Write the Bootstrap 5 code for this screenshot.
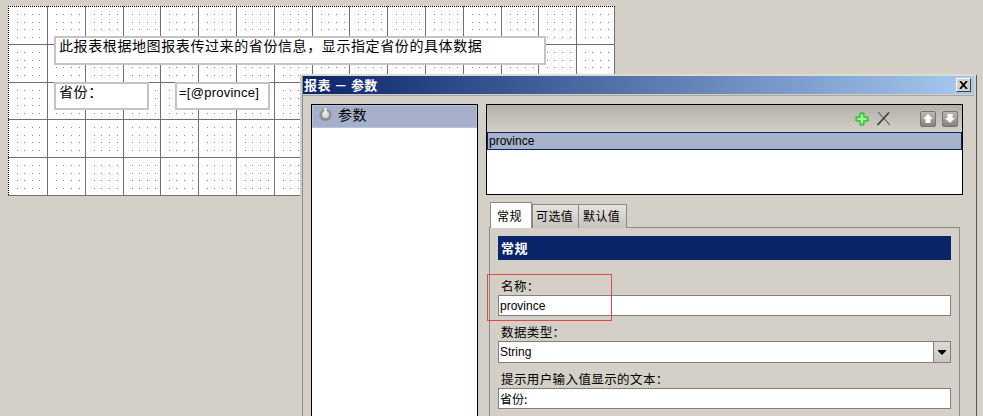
<!DOCTYPE html>
<html lang="zh-CN">
<head>
<meta charset="UTF-8">
<meta name="viewport" content="width=device-width, initial-scale=1.0">
<title>报表 - 参数</title>
<link href="https://cdn.jsdelivr.net/npm/bootstrap@5.3.0/dist/css/bootstrap.min.css" rel="stylesheet">
<style>
html, body { height: 416px; overflow: hidden; }
body { background: #d4d0c8; color: #000; font: 12px/14px "Liberation Sans", "Noto Sans CJK SC", sans-serif; position: relative; }
.cjk { font-family: "Noto Sans CJK SC", "Liberation Sans", sans-serif; }

/* report sheet */
.sheet { position: absolute; left: 8px; top: 6px; width: 607px; height: 190px; background: #fff; }
.sheet svg { position: absolute; left: 0; top: 0; }
.rcell { position: absolute; background: #fff; border: 2px solid #c4c4c4; font-size: 14px; line-height: 14px; padding: 0 3px; white-space: nowrap; }
.rc-desc { left: 46px; top: 30px; width: 492px; height: 29px; letter-spacing: .6px; }
.rc-prov { left: 46px; top: 76px; width: 95px; height: 28px; letter-spacing: .6px; }
.rc-expr { left: 167px; top: 76px; width: 95px; height: 28px; padding: 1px 0 0 2px; line-height: 16px; font-family: "Liberation Sans", sans-serif; font-size: 13px; letter-spacing: .25px; }

/* dialog window */
.dlg { position: absolute; left: 300px; top: 74px; width: 677px; height: 342px; overflow: hidden; background: #d4d0c8; border-left: 2px solid #d4d0c8; border-top: 2px solid #dedbd4; border-right: 1px solid #55534f; padding-left: 1px; padding-right: 2px; box-shadow: inset 1px 0 0 #8f8d88; }
.dlg-title { height: 18px; padding: 0 3px 0 1px; background: linear-gradient(90deg, #0a246a, #a6caf0); color: #fff; font-weight: 700; font-size: 13px; line-height: 18px; letter-spacing: .4px; }
.dlg-close { width: 15px; height: 14px; padding: 0; background: #d4d0c8; border: 1px solid; border-color: #fff #404040 #404040 #fff; }
.dlg-body { border-top: 1px solid #a9a69f; padding: 8px 11px 0 8px; gap: 8px; margin-top: 1px; }
.tree { width: 167px; height: 312px; flex: none; background: #fff; border: 1px solid #000; border-bottom: 0; }
.tree-row { height: 23px; background: #a6b0ca; border: 1px solid #b4c4e2; padding: 0 0 5px 5px; gap: 5px; font-size: 14px; letter-spacing: .5px; }
.right-col { width: 477px; flex: none; }
.plist { height: 91px; background: #fff; border: 1px solid #000; }
.ptools { height: 27px; background: linear-gradient(#b3b0a8, #d4d0c8); padding-right: 4px; gap: 7px; }
.ptools .tool-gap { width: 16px; }
.imgbtn { width: 16px; height: 16px; padding: 0; margin-left: -1px; border: 1px solid #77756f; border-radius: 2px; background: linear-gradient(#bdbab3, #85837d); }
.prow { height: 18px; background: #a6b1ca; border: 1px solid #0a246a; padding-left: 1px; line-height: 16px; }

.tabs-x { margin: 7px 0 0 4px; height: 26px; }
.tab-x { height: 24px; margin-top: 2px; padding: 0 0 0 3px; background: linear-gradient(#e6e4df, #c6c3bc); border: 1px solid #8a8a8a; border-bottom: 0; font-size: 12px; line-height: 21px; letter-spacing: .4px; width: 47px; }
.tab-x.on { height: 26px; margin-top: 0; width: 42px; padding: 2px 0 0 6px; background: #fff; position: relative; z-index: 1; }
.tab-x.last { width: 49px; margin-left: -1px; padding-left: 4px; }
.pane { margin-left: 3px; margin-top: -1px; width: 471px; height: 189px; border: 1px solid #8a8a8a; border-bottom: 0; padding: 8px 8px 0 8px; }
.banner { height: 24px; background: #0a246a; color: #fff; font-weight: 700; font-size: 13px; line-height: 24px; padding-left: 3px; letter-spacing: .5px; }
.flabel { margin: 0 0 1px; padding-left: 3px; font-size: 12.5px; line-height: 16px; letter-spacing: .4px; display: block; }
.fbox { display: block; width: 100%; height: 21px; padding: 0 1px; border: 1px solid #808080; border-radius: 0; background: #fff; color: #000; font-size: 12px; line-height: 19px; }
.fbox:focus { box-shadow: none; border-color: #808080; }
.f1 { margin-top: 18px; }
.f2, .f3 { margin-top: 8px; }
.combo { height: 22px; }
.combo .fbox { height: 22px; flex: 1; }
.combo-btn { width: 18px; height: 22px; flex: none; margin-left: -1px; padding: 0; border: 1px solid #808080; border-radius: 0; background: linear-gradient(#dedbd5, #c9c6bf); }
.redbox { position: absolute; left: 487px; top: 274px; width: 125px; height: 47px; border: 1px solid #e04848; pointer-events: none; z-index: 3; }
</style>
</head>
<body>

<div class="sheet">
    <svg id="sheetlines" width="607" height="190"></svg>
    <div class="rcell cjk rc-desc">此报表根据地图报表传过来的省份信息，显示指定省份的具体数据</div>
    <div class="rcell cjk rc-prov">省份：</div>
    <div class="rcell rc-expr">=[@province]</div>
</div>

<div class="dlg">
    <div class="dlg-title d-flex align-items-center justify-content-between">
        <span class="cjk">报表 － 参数</span>
        <button class="dlg-close d-flex align-items-center justify-content-center" type="button" aria-label="关闭">
            <svg width="9" height="8" viewBox="0 0 9 8"><path d="M1 0 L8 8 M8 0 L1 8" stroke="#000" stroke-width="1.8"/></svg>
        </button>
    </div>
    <div class="dlg-body d-flex align-items-start">
        <div class="tree">
            <div class="tree-row d-flex align-items-center cjk">
                <svg width="15" height="15" viewBox="0 0 15 15">
                    <circle cx="7.5" cy="8" r="6" fill="#8f8f8e"/>
                    <circle cx="7.5" cy="7.5" r="3.5" fill="#dcdcda"/>
                    <rect x="6.5" y="1" width="2" height="6.5" fill="#f6f6f4"/>
                </svg>
                <span>参数</span>
            </div>
        </div>
        <div class="right-col">
            <div class="plist">
                <div class="ptools d-flex align-items-center justify-content-end">
                    <svg width="14" height="14" viewBox="0 0 14 14">
                        <path d="M5 1 H9 V5 H13 V9 H9 V13 H5 V9 H1 V5 H5 Z" fill="#5fe85f" stroke="#1fb51f" stroke-width="1"/>
                        <path d="M6 3 H8 V6 H11 V8 H8 V11 H6 V8 H3 V6 H6 Z" fill="#a5f7a5"/>
                    </svg>
                    <svg width="15" height="15" viewBox="0 0 15 15">
                        <path d="M1.5 14 L13 1.5" stroke="#3d3d3d" stroke-width="1.8"/>
                        <path d="M2 1 L14 14" stroke="#55534f" stroke-width="1.1"/>
                    </svg>
                    <span class="tool-gap"></span>
                    <button class="imgbtn d-flex align-items-center justify-content-center" type="button" aria-label="上移">
                        <svg width="10" height="9" viewBox="0 0 10 9"><path d="M5 0 L10 5 H7.5 V9 H2.5 V5 H0 Z" fill="#fff"/></svg>
                    </button>
                    <button class="imgbtn d-flex align-items-center justify-content-center" type="button" aria-label="下移">
                        <svg width="10" height="9" viewBox="0 0 10 9"><path d="M2.5 0 H7.5 V4 H10 L5 9 L0 4 H2.5 Z" fill="#fff"/></svg>
                    </button>
                </div>
                <div class="prow">province</div>
            </div>

            <div class="tabs-x d-flex cjk">
                <div class="tab-x on">常规</div>
                <div class="tab-x">可选值</div>
                <div class="tab-x last">默认值</div>
            </div>
            <div class="pane">
                <div class="banner cjk">常规</div>
                <div class="f1">
                    <label class="flabel cjk" for="pname">名称：</label>
                    <input id="pname" class="fbox form-control" type="text" value="province" readonly>
                </div>
                <div class="f2">
                    <label class="flabel cjk" for="ptype">数据类型：</label>
                    <div class="combo d-flex">
                        <input id="ptype" class="fbox form-control" type="text" value="String" readonly>
                        <button class="combo-btn d-flex align-items-center justify-content-center" type="button" aria-label="展开">
                            <svg width="8" height="5" viewBox="0 0 8 5"><path d="M0 0 H8 V1 L4 5 L0 1 Z" fill="#000"/></svg>
                        </button>
                    </div>
                </div>
                <div class="f3">
                    <label class="flabel cjk" for="pprompt">提示用户输入值显示的文本：</label>
                    <input id="pprompt" class="fbox form-control cjk" type="text" value="省份:" readonly>
                </div>
            </div>
        </div>
    </div>
</div>

<div class="redbox"></div>

<script>
// draw the designer grid: cell lines plus four snap dots per cell
document.addEventListener("DOMContentLoaded", function(){
    let svg = "";
    const cols = [0], rows = [0, 38, 76, 113, 151];
    for (let x = 39; x < 600; x += 37.8) cols.push(Math.round(x));
    cols.forEach(function(x){
        if (x) svg += '<rect x="' + x + '" y="0" width="1" height="190" fill="#707070"/>';
        rows.forEach(function(y){
            for (let i = 0; i < 4; i++) {
                for (let j = 0; j < 4; j++) {
                    svg += '<rect x="' + Math.round(x + 8.7 + i * 7.6) + '" y="' + Math.round(y + 8 + j * 7.5) + '" width="1" height="1" fill="#808080"/>';
                }
            }
        });
    });
    rows.forEach(function(y){
        if (y) svg += '<rect x="0" y="' + y + '" width="607" height="1" fill="#707070"/>';
    });
    svg += '<rect x="606" y="0" width="1" height="190" fill="#707070"/>';
    svg += '<rect x="0" y="189" width="607" height="1" fill="#707070"/>';
    // dotted edge, top and left
    for (let i = 0; i < 607; i += 2) svg += '<rect x="' + i + '" y="0" width="1" height="1" fill="#000"/>';
    for (let i = 0; i < 190; i += 2) svg += '<rect x="0" y="' + i + '" width="1" height="1" fill="#000"/>';
    document.getElementById("sheetlines").innerHTML = svg;
});
</script>
<script src="https://cdn.jsdelivr.net/npm/bootstrap@5.3.0/dist/js/bootstrap.bundle.min.js"></script>
</body>
</html>
